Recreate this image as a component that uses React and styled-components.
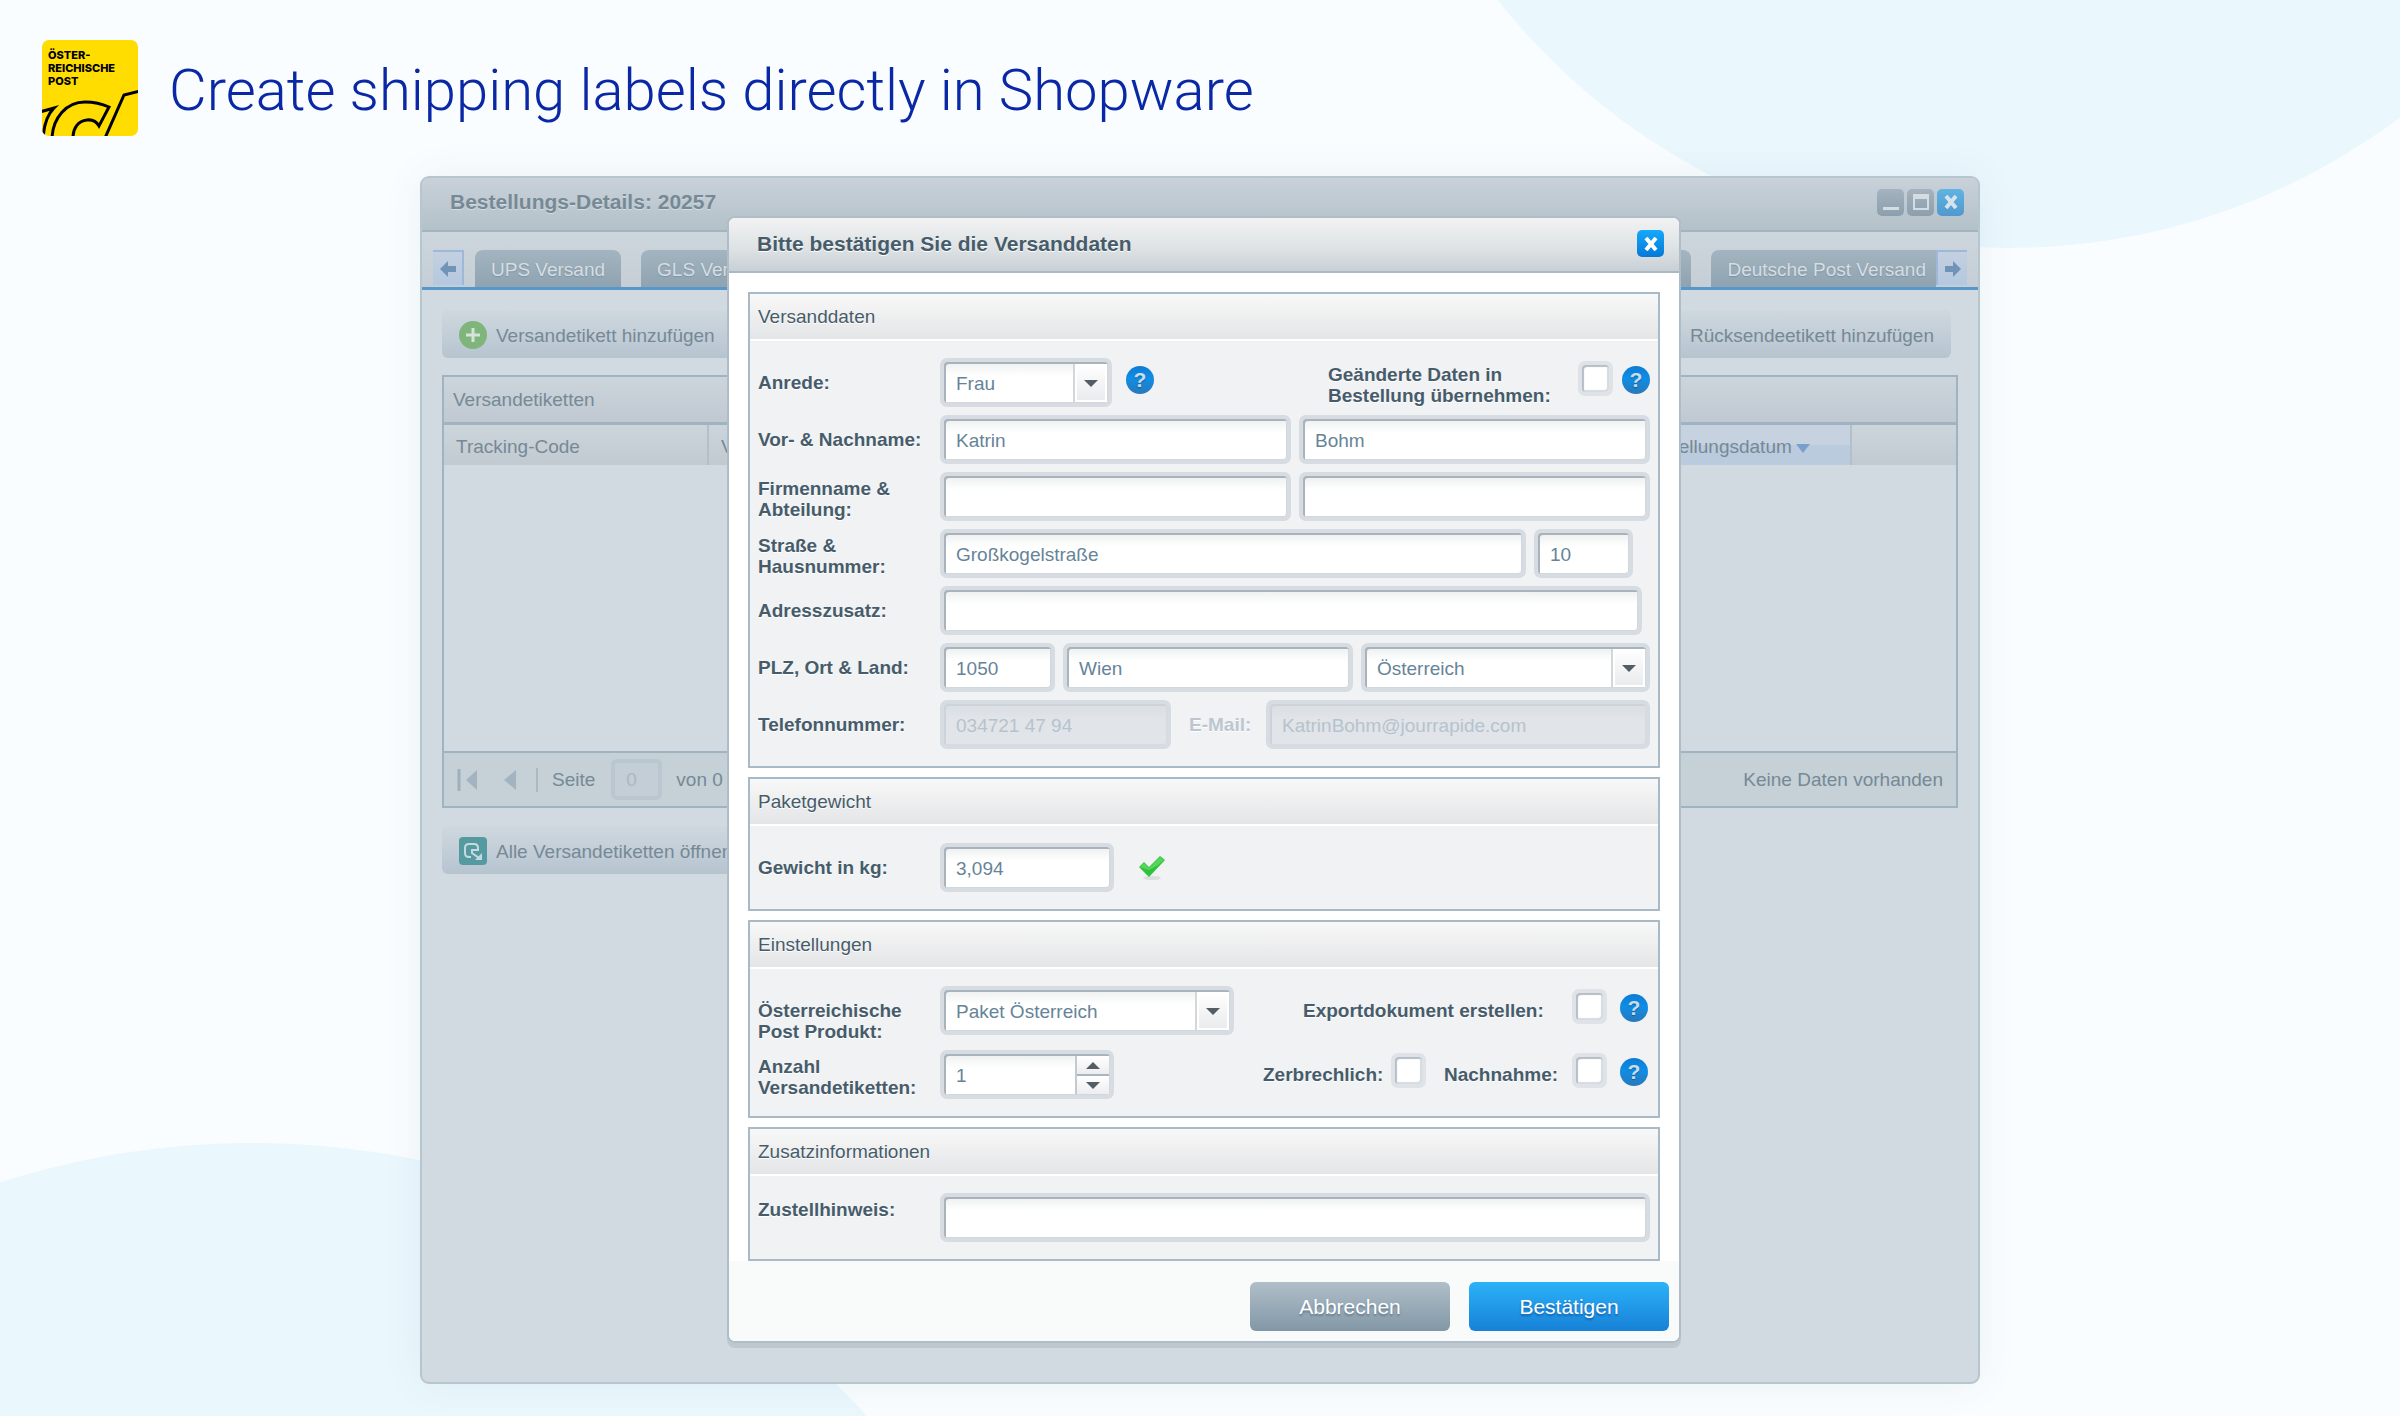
import React, { useState } from 'react';
import styled, { createGlobalStyle } from 'styled-components';

export default function App () {
  return (
    <Page>
      <GlobalStyle />
      <Backdrop>
        <TopCircle />
        <BottomCircle />
      </Backdrop>
      <Header>
        <PostLogo />
        <Title>Create shipping labels directly in Shopware</Title>
      </Header>
      <OrderWindow>
        <OrderDetails />
        <Overlay>
          <ShippingDialog />
        </Overlay>
      </OrderWindow>
    </Page>
  );
}

function PostLogo () {
  return (
    <Logo>
      <LogoText>ÖSTER-<br />REICHISCHE<br />POST</LogoText>
      <LogoHorn viewBox="0 0 96 48" aria-hidden="true">
        <path d="M-2 24 L12 20 C6 26 2 36 1 50" />
        <path d="M10 50 C11 30 24 14 43 14 Q56 14 67 19 L57 38 Q53 31 45 32 C36 33 31 40 31 50" />
        <path d="M63 50 L82 7 L98 3" />
      </LogoHorn>
    </Logo>
  );
}

function OrderDetails () {
  return (
    <>
      <WindowBar>
        <WindowTitle>Bestellungs-Details: 20257</WindowTitle>
        <WindowTools>
          <ToolButton aria-label="Minimieren">
            <svg width="18" height="18"><rect x="1" y="14" width="16" height="3" fill="#d5dde3" /></svg>
          </ToolButton>
          <ToolButton aria-label="Maximieren">
            <svg width="18" height="18">
              <path d="M2 2 H16 V16 H2 Z" fill="none" stroke="#d5dde3" strokeWidth="2" />
              <rect x="1" y="1" width="16" height="5" fill="#d5dde3" />
            </svg>
          </ToolButton>
          <ToolButton faded aria-label="Schließen"><Cross color="#d5e3ec" /></ToolButton>
        </WindowTools>
      </WindowBar>

      <TabStrip>
        <Scroller aria-label="Zurück"><Arrow left /></Scroller>
        <TabGroup>
          <Tab>UPS Versand</Tab>
          <Tab>GLS Versand</Tab>
        </TabGroup>
        <TabGroup right>
          <Tab>DHL Versand</Tab>
          <Tab last>Deutsche Post Versand</Tab>
        </TabGroup>
        <Scroller right aria-label="Weiter"><Arrow /></Scroller>
      </TabStrip>

      <WindowBody>
        <Toolbar>
          <ToolbarButton>
            <svg width="28" height="28" viewBox="0 0 28 28">
              <circle cx="14" cy="14" r="14" fill="#7fb57a" />
              <path d="M14 7 V21 M7 14 H21" stroke="#d6e3dc" strokeWidth="3" />
            </svg>
            Versandetikett hinzufügen
          </ToolbarButton>
          <ToolbarButton>Rücksendeetikett hinzufügen</ToolbarButton>
        </Toolbar>

        <Grid>
          <GridTitle>Versandetiketten</GridTitle>
          <Table>
            <thead>
              <tr>
                <Th width="264px">Tracking-Code</Th>
                <Th>Versandart</Th>
                <Th width="219px" sorted>
                  Erstellungsdatum
                  <svg width="14" height="9"><path d="M0 0 H14 L7 9 Z" fill="#7b9fcb" /></svg>
                </Th>
                <Th width="105px" />
              </tr>
            </thead>
          </Table>
          <GridEmpty />
          <Pager>
            <PagerButton aria-label="Erste Seite">
              <svg width="21" height="24"><path d="M2 1 V23" stroke="#9fb0bd" strokeWidth="3" /><path d="M20 2 V22 L9 12 Z" fill="#a3b4c0" /></svg>
            </PagerButton>
            <PagerButton aria-label="Vorherige Seite">
              <svg width="12" height="24"><path d="M12 2 V22 L0 12 Z" fill="#a3b4c0" /></svg>
            </PagerButton>
            <PagerLine />
            <label htmlFor="seite">Seite</label>
            <PagerInput id="seite" defaultValue="0" disabled />
            <span>von 0</span>
            <PagerInfo>Keine Daten vorhanden</PagerInfo>
          </Pager>
        </Grid>

        <Toolbar>
          <ToolbarButton>
            <svg width="28" height="28" viewBox="0 0 28 28">
              <rect width="28" height="28" rx="4" fill="#569aa1" />
              <path d="M12 20 H10 Q6 20 6 16 V11 Q6 7 10 7 H15 Q19 7 19 11 V13 H13 V16 L20 21" fill="none" stroke="#c4dade" strokeWidth="2" />
              <path d="M23 16 V23 H16 Z" fill="#c4dade" />
            </svg>
            Alle Versandetiketten öffnen
          </ToolbarButton>
        </Toolbar>
      </WindowBody>
    </>
  );
}

function ShippingDialog () {
  const [amount, setAmount] = useState(1);

  return (
    <Dialog role="dialog" aria-labelledby="dialog-title">
      <DialogBar>
        <DialogTitle id="dialog-title">Bitte bestätigen Sie die Versanddaten</DialogTitle>
        <ToolButton type="button" primary aria-label="Schließen"><Cross color="#fff" /></ToolButton>
      </DialogBar>

      <DialogBody>
        <Panel>
          <PanelTitle>Versanddaten</PanelTitle>
          <PanelBody>
            <Row>
              <Label htmlFor="anrede">Anrede:</Label>
              <Select id="anrede" width="172px" value="Frau" />
              <Help spaced />
              <Side>
                <Label htmlFor="uebernehmen" tall width="250px">Geänderte Daten in<br />Bestellung übernehmen:</Label>
                <Checkbox id="uebernehmen" />
                <Help />
              </Side>
            </Row>
            <Row>
              <Label htmlFor="vorname">Vor- & Nachname:</Label>
              <Field id="vorname" value="Katrin" />
              <Field label="Nachname" value="Bohm" />
            </Row>
            <Row>
              <Label htmlFor="firma" tall>Firmenname &<br />Abteilung:</Label>
              <Field id="firma" />
              <Field label="Abteilung" />
            </Row>
            <Row inset="17px">
              <Label htmlFor="strasse" tall>Straße &<br />Hausnummer:</Label>
              <Field id="strasse" value="Großkogelstraße" />
              <Field label="Hausnummer" value="10" width="99px" />
            </Row>
            <Row inset="8px">
              <Label htmlFor="adresszusatz">Adresszusatz:</Label>
              <Field id="adresszusatz" />
            </Row>
            <Row>
              <Label htmlFor="plz">PLZ, Ort & Land:</Label>
              <Field id="plz" value="1050" width="115px" />
              <Field label="Ort" value="Wien" />
              <Select label="Land" value="Österreich" width="289px" />
            </Row>
            <Row>
              <Label htmlFor="telefon">Telefonnummer:</Label>
              <Field id="telefon" value="034721 47 94" width="231px" disabled />
              <Label htmlFor="email" width="87px" muted>E-Mail:</Label>
              <Field id="email" value="KatrinBohm@jourrapide.com" disabled />
            </Row>
          </PanelBody>
        </Panel>

        <Panel>
          <PanelTitle>Paketgewicht</PanelTitle>
          <PanelBody>
            <Row>
              <Label htmlFor="gewicht">Gewicht in kg:</Label>
              <Field id="gewicht" value="3,094" width="174px" />
              <Check width="28" height="26" viewBox="0 0 28 26" aria-hidden="true">
                <ellipse cx="14" cy="23" rx="9" ry="2" fill="#dcdedf" />
                <path d="M1 12 L6 7 L11 12 L22 1 L27 5 L11 22 Z" fill="#2fc23d" />
                <path d="M2 12 L6 8 L11 13 L22 2 L26 5 L20 10 L11 15 Z" fill="#56d55c" />
              </Check>
            </Row>
          </PanelBody>
        </Panel>

        <Panel>
          <PanelTitle>Einstellungen</PanelTitle>
          <PanelBody>
            <Row inset="2px">
              <Label htmlFor="produkt">Österreichische<br />Post Produkt:</Label>
              <Select id="produkt" value="Paket Österreich" width="294px" />
              <Side>
                <Label htmlFor="export" width="269px">Exportdokument erstellen:</Label>
                <Checkbox id="export" spaced />
                <Help />
              </Side>
            </Row>
            <Row inset="2px">
              <Label htmlFor="anzahl" tall>Anzahl<br />Versandetiketten:</Label>
              <Frame width="174px">
                <Input id="anzahl" value={amount} onChange={e => setAmount(Number(e.target.value))} />
                <Spinner>
                  <SpinButton aria-label="Mehr" onClick={() => setAmount(amount + 1)}><Triangle up /></SpinButton>
                  <SpinButton aria-label="Weniger" onClick={() => setAmount(amount - 1)}><Triangle /></SpinButton>
                </Spinner>
              </Frame>
              <Side>
                <Label htmlFor="zerbrechlich" width="128px">Zerbrechlich:</Label>
                <Checkbox id="zerbrechlich" wide />
                <Label htmlFor="nachnahme" width="128px">Nachnahme:</Label>
                <Checkbox id="nachnahme" spaced />
                <Help />
              </Side>
            </Row>
          </PanelBody>
        </Panel>

        <Panel>
          <PanelTitle>Zusatzinformationen</PanelTitle>
          <PanelBody>
            <Row>
              <Label htmlFor="hinweis" tall>Zustellhinweis:</Label>
              <Field id="hinweis" />
            </Row>
          </PanelBody>
        </Panel>
      </DialogBody>

      <DialogFooter>
        <Button>Abbrechen</Button>
        <Button primary>Bestätigen</Button>
      </DialogFooter>
    </Dialog>
  );
}

function Field ({ id, label, value = '', width, disabled }) {
  return (
    <Frame width={width} muted={disabled}>
      <Input id={id} aria-label={label} defaultValue={value} disabled={disabled} />
    </Frame>
  );
}

function Select ({ id, label, value, width }) {
  return (
    <Frame width={width}>
      <NativeSelect id={id} aria-label={label} defaultValue={value}>
        <option>{value}</option>
      </NativeSelect>
      <Trigger><Triangle /></Trigger>
    </Frame>
  );
}

function Help ({ spaced }) {
  return <HelpButton spaced={spaced} aria-label="Hilfe">?</HelpButton>;
}

function Triangle ({ up }) {
  return (
    <svg width="14" height="7" aria-hidden="true">
      <path d={up ? 'M0 7 H14 L7 0 Z' : 'M0 0 H14 L7 7 Z'} fill="#525d66" />
    </svg>
  );
}

function Cross ({ color }) {
  return (
    <svg width="14" height="14" aria-hidden="true">
      <path d="M2 1 L12 13 M12 1 L2 13" stroke={color} strokeWidth="4" />
    </svg>
  );
}

function Arrow ({ left }) {
  return (
    <svg width="16" height="16" aria-hidden="true">
      <path
        d={left ? 'M0 8 L8 0 V5 H16 V11 H8 V16 Z' : 'M16 8 L8 0 V5 H0 V11 H8 V16 Z'}
        fill="#7193b8"
      />
    </svg>
  );
}

const plain = { shouldForwardProp: prop => !['width', 'tall', 'muted', 'spaced', 'wide', 'primary', 'faded', 'right', 'last', 'sorted', 'inset'].includes(prop) };

const GlobalStyle = createGlobalStyle`
  * {
    box-sizing: border-box;
  }

  body {
    margin: 0;
  }

  body, button, input, select {
    font-family: "Liberation Sans", Arial, sans-serif;
    font-size: 19px;
    line-height: 21px;
  }

  button {
    padding: 0;
    border: none;
    cursor: pointer;
  }

  svg {
    display: block;
    flex-shrink: 0;
  }
`;

const Page = styled.div`
  position: relative;
  min-height: 100vh;
  padding: 40px 0 32px;
  background: #f9fdff;
`;

const Backdrop = styled.div`
  position: absolute;
  inset: 0;
  overflow: hidden;
`;

const Circle = styled.div`
  position: absolute;
  border-radius: 50%;
  background: #eaf8fe;
`;

const TopCircle = styled(Circle)`
  top: -1054px;
  right: -260px;
  width: 1302px;
  height: 1302px;
`;

const BottomCircle = styled(Circle)`
  bottom: -1385px;
  left: -577px;
  width: 1658px;
  height: 1658px;
`;

const Header = styled.header`
  position: relative;
  display: flex;
  align-items: center;
  gap: 31px;
  margin-bottom: 40px;
  padding-left: 42px;
`;

const Logo = styled.div`
  display: flex;
  flex-direction: column;
  justify-content: space-between;
  width: 96px;
  height: 96px;
  border-radius: 7px;
  background: #ffdd00;
  overflow: hidden;
`;

const LogoText = styled.div`
  padding: 9px 0 0 6px;
  color: #000;
  font-family: Inter, sans-serif;
  font-size: 11px;
  font-weight: 800;
  line-height: 13px;
`;

const LogoHorn = styled.svg`
  width: 96px;
  height: 48px;
  fill: none;
  stroke: #000;
  stroke-width: 3;
`;

const Title = styled.h1`
  margin: 0;
  padding-top: 3px;
  color: #0a28a5;
  font-family: Roboto, sans-serif;
  font-size: 58px;
  font-weight: 300;
  line-height: 70px;
`;

const OrderWindow = styled.main`
  position: relative;
  width: 65%;
  min-width: 1020px;
  min-height: 1208px;
  margin: 0 auto;
  border: 2px solid #b7c5cf;
  border-radius: 9px;
  background: #d1d9e1;
  box-shadow: 0 0 40px rgba(60, 70, 90, 0.07);
  color: #768995;
`;

const WindowBar = styled.div`
  display: flex;
  align-items: center;
  justify-content: space-between;
  height: 54px;
  padding: 0 14px 4px 28px;
  border-bottom: 2px solid #a2b5c0;
  border-radius: 7px 7px 0 0;
  background: linear-gradient(#c9d1d9, #b3c1c9);
`;

const WindowTitle = styled.h2`
  margin: 0;
  font-size: 21px;
  line-height: 24px;
  text-shadow: 0 1px 0 #d3dce2;
`;

const WindowTools = styled.div`
  display: flex;
  gap: 3px;
`;

const ToolButton = styled.button.withConfig(plain)`
  display: flex;
  align-items: center;
  justify-content: center;
  width: 27px;
  height: 27px;
  border-radius: 5px;
  background: ${props => props.primary ? 'linear-gradient(#16a9fb, #0479d6)' : props.faded ? 'linear-gradient(#5fb4e2, #5298ce)' : 'linear-gradient(#a3b3bf, #8d9fad)'};
`;

const TabStrip = styled.div`
  display: flex;
  height: 58px;
  padding: 18px 11px 0;
  border-bottom: 3px solid #5797c9;
  background: linear-gradient(#cdd5dd, #c5cdd5);
`;

const Scroller = styled.button.withConfig(plain)`
  display: flex;
  align-items: center;
  justify-content: center;
  width: 31px;
  height: 35px;
  border: 2px solid #9fb8da;
  border-width: ${props => props.right ? '2px 0 0 2px' : '2px 2px 0 0'};
  background: linear-gradient(#c3d0e0, #b5c8de);
`;

const TabGroup = styled.div.withConfig(plain)`
  display: flex;
  gap: 20px;
  margin-left: ${props => props.right ? 'auto' : '11px'};
`;

const Tab = styled.button.withConfig(plain)`
  height: 37px;
  padding: ${props => props.last ? '2px 10px 0 16px' : '2px 16px 0'};
  border-radius: ${props => props.last ? '8px 0 0 0' : '8px 8px 0 0'};
  background: linear-gradient(#a3b5c0, #8ea2b0);
  color: #d6dde3;
  text-shadow: 0 1px 1px #7f929f;
`;

const WindowBody = styled.div`
  display: flex;
  flex-direction: column;
  gap: 17px;
  padding: 20px;
`;

const Toolbar = styled.div`
  display: flex;
  justify-content: space-between;
  padding-right: 7px;
`;

const ToolbarButton = styled.button`
  display: flex;
  align-items: center;
  gap: 9px;
  height: 48px;
  padding: 2px 17px 0;
  border-radius: 6px;
  background: linear-gradient(#cfd8df, #b6c4d0);
  color: #768995;
`;

const Grid = styled.section`
  margin-bottom: 1px;
  border: 2px solid #9fb3c0;
`;

const GridTitle = styled.div`
  height: 48px;
  padding: 12px 9px 0;
  border-bottom: 3px solid #9fb3c0;
  background: linear-gradient(#ccd4dc, #c0c9d1);
`;

const Table = styled.table`
  width: 100%;
  border-collapse: collapse;
  table-layout: fixed;
`;

const Th = styled.th.withConfig(plain)`
  width: ${props => props.width || 'auto'};
  height: 40px;
  padding: 2px 10px 0 12px;
  border-right: 2px solid #b3c0ca;
  background: ${props => props.sorted ? 'linear-gradient(#c6d2df 50%, #bbcbde 50%)' : 'linear-gradient(#cdd5dc, #c1c9d1)'};
  font-weight: 400;
  text-align: left;
  white-space: nowrap;

  &:last-child {
    border-right: none;
  }

  svg {
    display: inline-block;
    margin-left: 4px;
  }
`;

const GridEmpty = styled.div`
  height: 286px;
`;

const Pager = styled.div`
  display: flex;
  align-items: center;
  gap: 14px;
  height: 55px;
  padding: 0 13px;
  border-top: 2px solid #9fb3c0;
  background: #c5d0d7;
`;

const PagerButton = styled.button`
  margin-right: 12px;
  background: none;
`;

const PagerLine = styled.div`
  width: 2px;
  height: 24px;
  margin-left: -6px;
  background: #aab9c3;
`;

const PagerInput = styled.input`
  width: 51px;
  height: 41px;
  margin-left: 2px;
  padding: 0 11px;
  border: 4px solid #bbc7d0;
  border-radius: 6px;
  background: #c3ced6;
  color: #a9b8c3;
`;

const PagerInfo = styled.span`
  margin-left: auto;
`;

const Overlay = styled.div`
  position: absolute;
  inset: 0;
  display: flex;
  align-items: flex-start;
  justify-content: center;
  padding: 38px 0 0 8px;
`;

const Dialog = styled.form`
  width: 954px;
  border: 2px solid #aebdc8;
  border-radius: 8px;
  background: #fff;
  box-shadow: 0 5px 0 #bfc8d1;
  color: #475c6a;
  text-shadow: 0 1px 0 #fff;
`;

const DialogBar = styled.div`
  display: flex;
  align-items: center;
  justify-content: space-between;
  height: 55px;
  padding: 0 15px 2px 28px;
  border-bottom: 2px solid #abb9c3;
  border-radius: 6px 6px 0 0;
  background: linear-gradient(#f1f2f2, #dfe3e5 55%, #c8d0d6);
`;

const DialogTitle = styled.h3`
  margin: 0;
  font-size: 21px;
  line-height: 24px;
`;

const DialogBody = styled.div`
  display: flex;
  flex-direction: column;
  gap: 9px;
  padding: 19px 19px 0;
`;

const Panel = styled.section`
  border: 2px solid #a9bac6;
`;

const PanelTitle = styled.h4`
  height: 47px;
  margin: 0;
  padding: 12px 8px 0;
  border-bottom: 2px solid #fff;
  background: linear-gradient(#f8f8f8, #e4e5e7);
  font-weight: 400;
`;

const PanelBody = styled.div`
  display: flex;
  flex-direction: column;
  gap: 8px;
  padding: 17px 8px;
  background: #f0f2f4;
`;

const Row = styled.div.withConfig(plain)`
  display: flex;
  gap: 8px;
  padding-right: ${props => props.inset || 0};
`;

const Label = styled.label.withConfig(plain)`
  flex-shrink: 0;
  width: ${props => props.width || '182px'};
  margin-right: -8px;
  padding-top: ${props => props.tall ? '6px' : '14px'};
  padding-left: ${props => props.muted ? '10px' : 0};
  color: ${props => props.muted ? '#bcc6ce' : 'inherit'};
  font-weight: 700;
`;

const Side = styled.div`
  display: flex;
  gap: 8px;
  margin-left: auto;
`;

const Frame = styled.div.withConfig(plain)`
  display: flex;
  flex: ${props => props.width ? 'none' : '1'};
  width: ${props => props.width || 'auto'};
  height: 49px;
  padding: 2px 1px 1px 2px;
  border: 4px solid #d6dce2;
  border-radius: 7px;
  background: ${props => props.muted ? 'linear-gradient(#dadfe4, #e1e4e8 16px)' : 'linear-gradient(#edf0f0, #fff 14px)'};
  background-clip: padding-box;
  background-color: #d6dce2;
  box-shadow: ${props => props.muted
    ? 'inset 2px 2px 0 #ccd3da, inset -1px -1px 0 #d6dbe1'
    : 'inset 2px 2px 0 #a8b3bc, inset -1px -1px 0 #d0d7dd'};
`;

const Input = styled.input`
  flex: 1;
  min-width: 0;
  padding: 0 10px;
  border: none;
  background: transparent;
  color: #668498;

  &:disabled {
    color: #b6c3cd;
  }
`;

const NativeSelect = styled.select`
  flex: 1;
  min-width: 0;
  padding: 0 10px;
  border: none;
  background: transparent;
  color: #668498;
  appearance: none;
`;

const Trigger = styled.span`
  display: flex;
  align-items: center;
  justify-content: center;
  width: 34px;
  border-left: 2px solid #d3d7da;
  background: linear-gradient(#fff, #e9eaec);
  box-shadow: inset 0 0 0 2px #fff;
  pointer-events: none;
`;

const Spinner = styled.div`
  display: flex;
  flex-direction: column;
  width: 34px;
  border-left: 2px solid #c3cad0;
`;

const SpinButton = styled.button.attrs({ type: 'button' })`
  display: flex;
  flex: 1;
  align-items: center;
  justify-content: center;
  background: linear-gradient(#fff, #ededef);

  &:first-child {
    border-bottom: 2px solid #a9b5bf;
  }
`;

const HelpButton = styled.button.attrs({ type: 'button' }).withConfig(plain)`
  flex-shrink: 0;
  width: 28px;
  height: 28px;
  margin-top: 8px;
  margin-left: ${props => props.spaced ? '6px' : 0};
  border-radius: 50%;
  background: linear-gradient(#0d7cd2, #0f8de6 45%, #2a78b8);
  color: #c6ddef;
  font-size: 21px;
  font-weight: 700;
  line-height: 28px;
  text-shadow: 0 1px 1px #145a91;
`;

const Checkbox = styled.input.attrs({ type: 'checkbox' }).withConfig(plain)`
  flex-shrink: 0;
  width: 35px;
  height: 35px;
  margin: 3px 0 0;
  margin-right: ${props => props.spaced ? '5px' : props.wide ? '10px' : '1px'};
  border: 4px solid #dfe3e7;
  border-radius: 7px;
  background: #fff;
  box-shadow: inset 2px 2px 1px #b4bec6, inset -2px -2px 1px #d5dbe0;
  appearance: none;
`;

const Check = styled.svg`
  margin: 12px 0 0 16px;
`;

const DialogFooter = styled.div`
  display: flex;
  justify-content: flex-end;
  gap: 19px;
  padding: 21px 10px 10px;
  border-radius: 0 0 6px 6px;
  background: #f9fbfb;
`;

const Button = styled.button.attrs({ type: 'button' }).withConfig(plain)`
  width: 200px;
  height: 49px;
  border-radius: 6px;
  background: ${props => props.primary ? 'linear-gradient(#2cb2f8, #1781d7)' : 'linear-gradient(#b0bfc9, #8297a6)'};
  color: #fff;
  font-size: 21px;
  text-shadow: 0 2px 2px ${props => props.primary ? '#1563b0' : '#667c8c'};
`;
